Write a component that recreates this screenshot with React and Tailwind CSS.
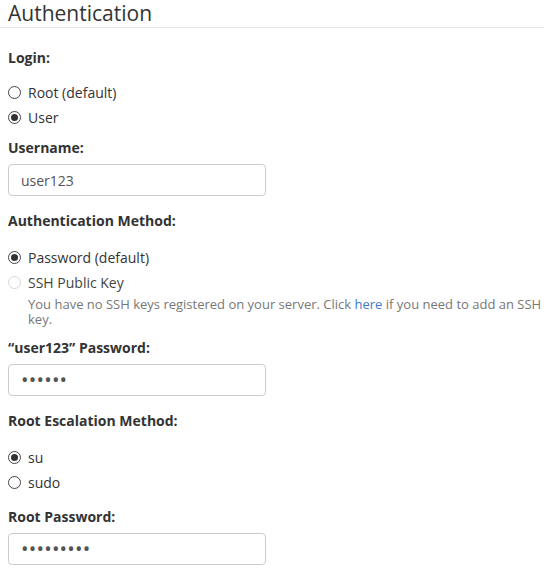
import React from "react";

function Radio({ checked, disabled, label }) {
  return (
    <label className="flex items-center h-5 gap-[7px]">
      <span
        className={`flex items-center justify-center w-[13px] h-[13px] rounded-full border ${
          disabled ? "border-[#d6d6d6]" : "border-[#444]"
        }`}>
        {checked && <span className="w-[7px] h-[7px] rounded-full bg-[#333]" />}
      </span>
      <span className={disabled ? "text-[#444]" : "text-[#333]"}>{label}</span>
    </label>
  );
}

function Field({ value, password }) {
  return (
    <div className="mt-[6px] w-[258px] h-8 rounded border border-[#ccc] flex items-center px-3 text-[#555]">
      {password ? (
        <span className="text-[20px] leading-none tracking-[0.2px] text-[#555]">{value}</span>
      ) : (
        value
      )}
    </div>
  );
}

export default function App() {
  return (
    <div className="w-[544px] h-[574px] bg-white text-[14px] text-[#333] font-['Open_Sans',sans-serif] overflow-hidden">
      {/* Header */}
      <div className="h-[28px] border-b border-[#e5e5e5] px-2">
        <h2 className="text-[21px] leading-[26px] text-[#333]">Authentication</h2>
      </div>

      <div className="pl-2">
        <div className="mt-[20px] h-5 leading-5 font-bold">Login:</div>
        <div className="mt-[14px] flex flex-col gap-[5px]">
          <Radio label="Root (default)" />
          <Radio checked label="User" />
        </div>

        <div className="mt-[11px] h-5 leading-5 font-bold">Username:</div>
        <Field value="user123" />

        <div className="mt-[15px] h-5 leading-5 font-bold">Authentication Method:</div>
        <div className="mt-[16px] flex flex-col gap-[5px]">
          <Radio checked label="Password (default)" />
          <Radio disabled label="SSH Public Key" />
        </div>
        <p className="pl-5 mt-[5px] text-[13px] leading-[15px] text-[#777]">
          You have no SSH keys registered on your server. Click{" "}
          <span className="text-[#3f7cc2]">here</span> if you need to add an SSH key.
        </p>

        <div className="mt-[11px] h-5 leading-5 font-bold">“user123” Password:</div>
        <Field password value="••••••" />

        <div className="mt-[15px] h-5 leading-5 font-bold">Root Escalation Method:</div>
        <div className="mt-[16px] flex flex-col gap-[5px]">
          <Radio checked label="su" />
          <Radio label="sudo" />
        </div>

        <div className="mt-[15px] h-5 leading-5 font-bold">Root Password:</div>
        <Field password value="•••••••••" />
      </div>
    </div>
  );
}
